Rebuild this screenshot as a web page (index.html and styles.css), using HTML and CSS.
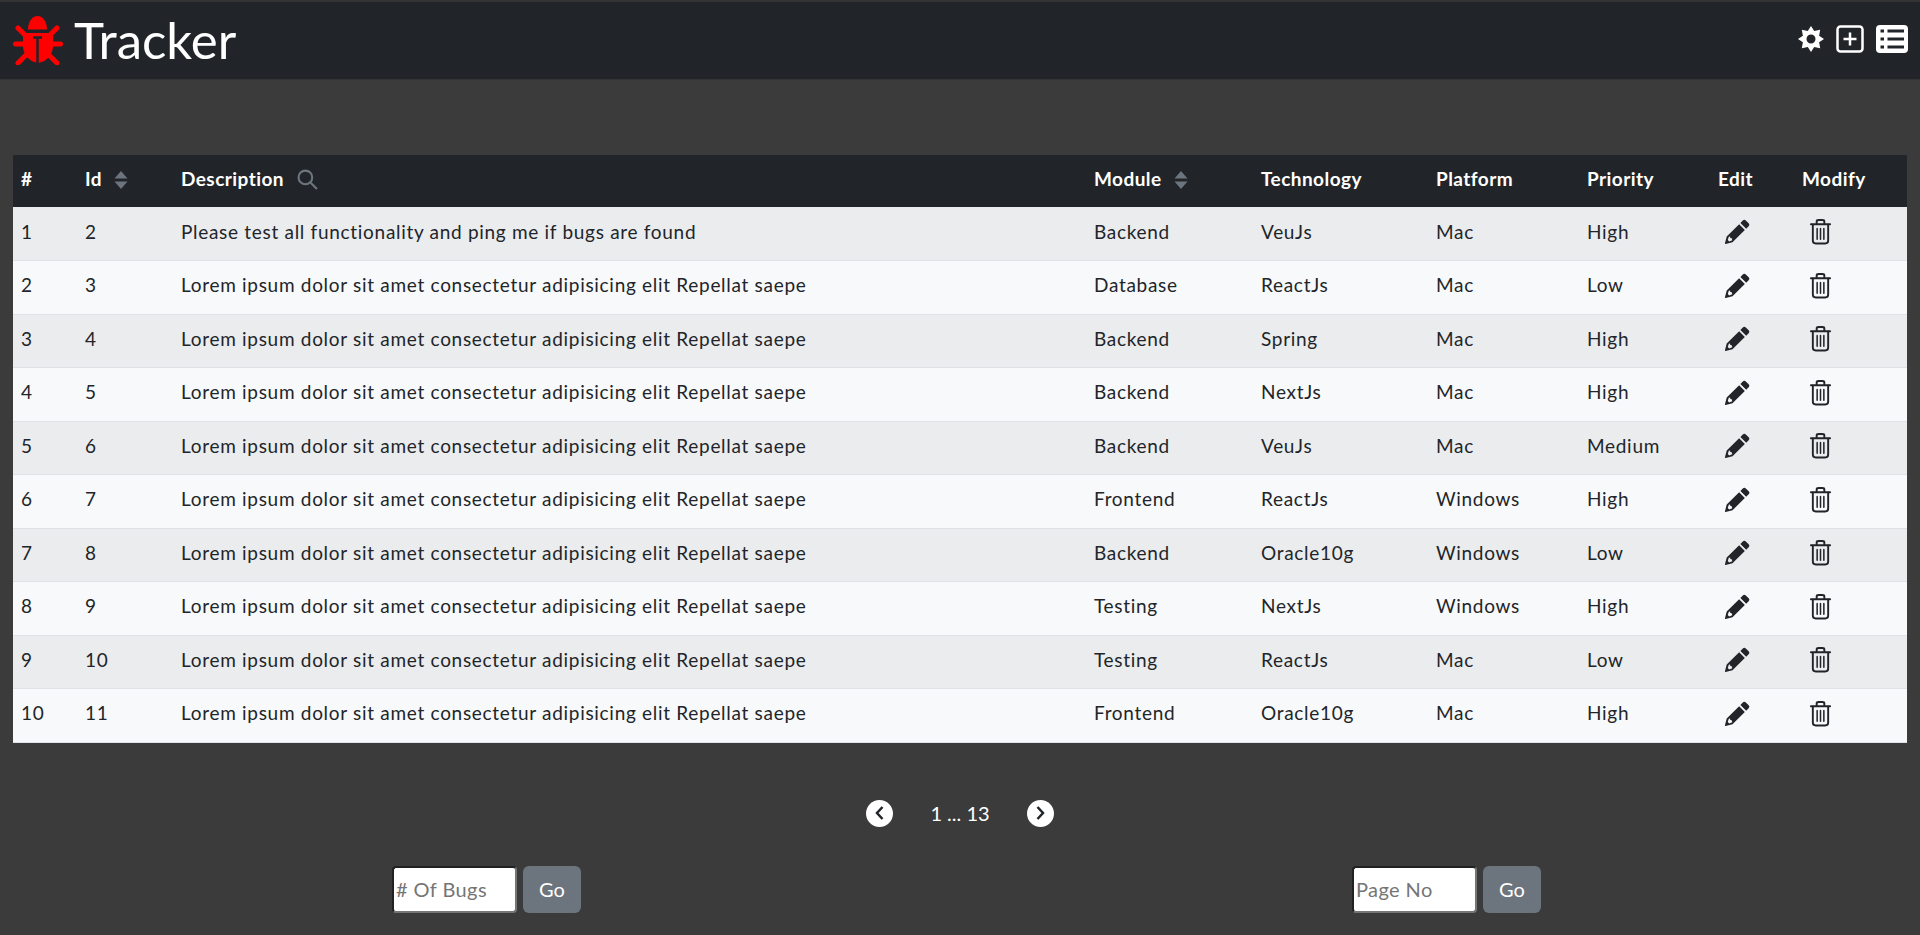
FILE: index.html
```html
<!DOCTYPE html>
<html lang="en">
  <head>
    <meta charset="UTF-8" />
    <title>Tracker</title>
    <link rel="stylesheet" href="styles.css">
  </head>
  <body>
    <svg class="icon-defs" aria-hidden="true">
      <symbol id="sort" viewBox="0 0 14 18"><path d="M7 0 13.500 7.500H.5zM.5 10.500H13.500L7 18z"/></symbol>
      <symbol id="pencil" viewBox="0 0 28 28"><path d="M19.500 2.500a2.200 2.200 0 0 1 3.100 0l3 3a2.200 2.200 0 0 1 0 3.100L23 11.200 17 5.100zM15.700 6.500l5.900 6L8.800 25.200 1.700 27a.6.6 0 0 1-.7-.7l1.800-7.100zM5 19.500l-1.100 3.300 1.500 1.500 3.200-1.100L8 21l-1.500-.2-.2-1.500z"/></symbol>
      <symbol id="trash" viewBox="0 0 24 28"><g fill="none" stroke="currentColor" stroke-width="2" stroke-linecap="round"><path d="M2 6.500H22"/><path d="M8 6V3.500C8 2.500 9 2 10 2h4c1 0 2 .5 2 1.500V6"/><path d="M4 7V23.500C4 25.500 5 26.500 7 26.500H17C19 26.500 20 25.500 20 23.500V7"/><path d="M8.500 11V22M12 11V22M15.500 11V22" stroke-width="1.600"/></g></symbol>
    </svg>

    <nav class="navbar">
      <a class="brand" href="#">
        <svg class="bug" viewBox="0 0 50 50">
          <path class="bug-part" d="M15 14.500C15 7 19 1 24.500 1S34 7 34 14.500z"/>
          <path class="bug-part" d="M10 18H40V31C40 40 33 47 25 48C17 47 10 40 10 31z"/>
          <path class="bug-legs" d="M5 13 15 23M44 13 34 23M2.500 29H47.500M5 48 15 38M44 48 34 38"/>
          <path class="bug-split" d="M20 22.500H29M24.500 22.500V49"/>
        </svg>
        <span>Tracker</span>
      </a>
      <div class="nav-icons">
        <svg class="nav-icon gear" viewBox="0 0 26 26"><path fill-rule="evenodd" d="M13 0 16.200 4.900 22.200 3.800 21.100 9.800 26 13 21.100 16.200 22.200 22.200 16.200 21.100 13 26 9.800 21.100 3.800 22.200 4.900 16.200 0 13 4.900 9.800 3.800 3.800 9.800 4.900zM13 8.500a4.500 4.500 0 1 0 0 9 4.500 4.500 0 0 0 0-9z"/></svg>
        <svg class="nav-icon plus" viewBox="0 0 28 28"><rect x="1.500" y="1.500" width="25" height="25" rx="3" fill="none" stroke="#fff" stroke-width="2.500"/><path d="M14 7.500V20.500M7.500 14H20.500" stroke="#fff" stroke-width="2.500"/></svg>
        <svg class="nav-icon list" viewBox="0 0 32 28"><rect x="0" y="0" width="32" height="28" rx="4" fill="#fff"/><path d="M4.500 6H8M11.500 6H28M4.500 14H8M11.500 14H28M4.500 22H8M11.500 22H28" stroke="#212529" stroke-width="3"/></svg>
      </div>
    </nav>

    <main class="content">
      <table class="bugs">
        <colgroup>
          <col class="c-num" /><col class="c-id" /><col class="c-desc" /><col class="c-module" /><col class="c-tech" /><col class="c-platform" /><col class="c-priority" /><col class="c-edit" /><col class="c-modify" />
        </colgroup>
        <thead>
          <tr>
            <th>#</th>
            <th>Id <svg class="sort"><use href="#sort"/></svg></th>
            <th>Description <svg class="search" viewBox="0 0 20 20"><circle cx="8" cy="8" r="6.500"/><path d="M13 13 19 19"/></svg></th>
            <th>Module <svg class="sort"><use href="#sort"/></svg></th>
            <th>Technology</th>
            <th>Platform</th>
            <th>Priority</th>
            <th>Edit</th>
            <th>Modify</th>
          </tr>
        </thead>
        <tbody>
          <tr><td>1</td><td>2</td><td>Please test all functionality and ping me if bugs are found</td><td>Backend</td><td>VeuJs</td><td>Mac</td><td>High</td><td class="act"><svg class="pencil"><use href="#pencil"/></svg></td><td class="act"><svg class="trash"><use href="#trash"/></svg></td></tr>
          <tr><td>2</td><td>3</td><td>Lorem ipsum dolor sit amet consectetur adipisicing elit Repellat saepe</td><td>Database</td><td>ReactJs</td><td>Mac</td><td>Low</td><td class="act"><svg class="pencil"><use href="#pencil"/></svg></td><td class="act"><svg class="trash"><use href="#trash"/></svg></td></tr>
          <tr><td>3</td><td>4</td><td>Lorem ipsum dolor sit amet consectetur adipisicing elit Repellat saepe</td><td>Backend</td><td>Spring</td><td>Mac</td><td>High</td><td class="act"><svg class="pencil"><use href="#pencil"/></svg></td><td class="act"><svg class="trash"><use href="#trash"/></svg></td></tr>
          <tr><td>4</td><td>5</td><td>Lorem ipsum dolor sit amet consectetur adipisicing elit Repellat saepe</td><td>Backend</td><td>NextJs</td><td>Mac</td><td>High</td><td class="act"><svg class="pencil"><use href="#pencil"/></svg></td><td class="act"><svg class="trash"><use href="#trash"/></svg></td></tr>
          <tr><td>5</td><td>6</td><td>Lorem ipsum dolor sit amet consectetur adipisicing elit Repellat saepe</td><td>Backend</td><td>VeuJs</td><td>Mac</td><td>Medium</td><td class="act"><svg class="pencil"><use href="#pencil"/></svg></td><td class="act"><svg class="trash"><use href="#trash"/></svg></td></tr>
          <tr><td>6</td><td>7</td><td>Lorem ipsum dolor sit amet consectetur adipisicing elit Repellat saepe</td><td>Frontend</td><td>ReactJs</td><td>Windows</td><td>High</td><td class="act"><svg class="pencil"><use href="#pencil"/></svg></td><td class="act"><svg class="trash"><use href="#trash"/></svg></td></tr>
          <tr><td>7</td><td>8</td><td>Lorem ipsum dolor sit amet consectetur adipisicing elit Repellat saepe</td><td>Backend</td><td>Oracle10g</td><td>Windows</td><td>Low</td><td class="act"><svg class="pencil"><use href="#pencil"/></svg></td><td class="act"><svg class="trash"><use href="#trash"/></svg></td></tr>
          <tr><td>8</td><td>9</td><td>Lorem ipsum dolor sit amet consectetur adipisicing elit Repellat saepe</td><td>Testing</td><td>NextJs</td><td>Windows</td><td>High</td><td class="act"><svg class="pencil"><use href="#pencil"/></svg></td><td class="act"><svg class="trash"><use href="#trash"/></svg></td></tr>
          <tr><td>9</td><td>10</td><td>Lorem ipsum dolor sit amet consectetur adipisicing elit Repellat saepe</td><td>Testing</td><td>ReactJs</td><td>Mac</td><td>Low</td><td class="act"><svg class="pencil"><use href="#pencil"/></svg></td><td class="act"><svg class="trash"><use href="#trash"/></svg></td></tr>
          <tr><td>10</td><td>11</td><td>Lorem ipsum dolor sit amet consectetur adipisicing elit Repellat saepe</td><td>Frontend</td><td>Oracle10g</td><td>Mac</td><td>High</td><td class="act"><svg class="pencil"><use href="#pencil"/></svg></td><td class="act"><svg class="trash"><use href="#trash"/></svg></td></tr>
        </tbody>
      </table>

      <div class="pager">
        <button class="page-arrow" aria-label="Previous"><svg viewBox="0 0 12 16"><path d="M8.500 2 3 8l5.500 6"/></svg></button>
        <span class="page-text">1 ... 13</span>
        <button class="page-arrow" aria-label="Next"><svg viewBox="0 0 12 16"><path d="M3.500 2 9 8l-5.500 6"/></svg></button>
      </div>

      <div class="forms">
        <div class="go-form"><input type="text" placeholder="# Of Bugs" /><button class="btn-go">Go</button></div>
        <div class="go-form"><input type="text" placeholder="Page No" /><button class="btn-go">Go</button></div>
      </div>
    </main>
  </body>
</html>
```

FILE: styles.css
```css
* {
  box-sizing: border-box;
}
body {
  margin: 0;
  min-height: 935px;
  overflow: hidden;
  font-family: "Lato", "Noto Sans", sans-serif;
  font-size: 19px;
  background: #3b3b3b;
  color: #212529;
}
.icon-defs {
  display: none;
}

/* navbar */
.navbar {
  height: 80px;
  padding: 0 12px 0 13px;
  display: flex;
  align-items: center;
  justify-content: space-between;
  background: #212529;
  border-top: 2px solid #333;
  border-bottom: 1px solid #333;
}
.brand {
  display: flex;
  align-items: center;
  gap: 11px;
  margin-bottom: 2px;
  color: #fff;
  text-decoration: none;
  font-size: 51px;
  line-height: 1;
}
.bug {
  width: 50px;
  height: 50px;
}
.bug-part {
  fill: #f00;
}
.bug-legs {
  fill: none;
  stroke: #f00;
  stroke-width: 5;
  stroke-linecap: round;
}
.bug-split {
  fill: none;
  stroke: #212529;
  stroke-width: 2.500;
}
.nav-icons {
  display: flex;
  align-items: center;
  gap: 12px;
  margin-bottom: 4px;
}
.nav-icon {
  display: block;
  fill: #fff;
}
.gear {
  width: 26px;
  height: 26px;
  margin-top: 1px;
}
.plus {
  width: 28px;
  height: 28px;
}
.list {
  width: 32px;
  height: 28px;
}

/* table */
.content {
  padding: 75px 13px 0;
}
.bugs {
  width: 1894px;
  table-layout: fixed;
  border-collapse: collapse;
  background: #f8f9fa;
}
.c-num { width: 64px; }
.c-id { width: 96px; }
.c-desc { width: 913px; }
.c-module { width: 167px; }
.c-tech { width: 175px; }
.c-platform { width: 151px; }
.c-priority { width: 131px; }
.c-edit { width: 84px; }
.c-modify { width: 113px; }

.bugs th {
  height: 52px;
  padding: 0 8px 5px;
  text-align: left;
  font-weight: 700;
  letter-spacing: 0.45px;
  color: #fff;
  background: #212529;
}
.bugs td {
  height: 53.5px;
  padding: 0 8px 5px;
  letter-spacing: 0.7px;
  color: #212529;
  border-bottom: 1px solid #dee2e6;
}
.bugs tbody tr:nth-child(odd) td {
  background: #ebecee;
}
.bugs td.act {
  padding: 0 0 4px 14px;
}
.sort {
  width: 14px;
  height: 18px;
  margin-left: 7px;
  vertical-align: -3px;
  fill: #6c757d;
}
.search {
  width: 21px;
  height: 21px;
  margin-left: 8px;
  vertical-align: -4px;
  fill: none;
  stroke: #6c757d;
  stroke-width: 2;
}
.pencil {
  display: block;
  width: 27px;
  height: 27px;
  fill: #212529;
}
.trash {
  display: block;
  width: 23px;
  height: 27px;
  margin-left: 1px;
  color: #212529;
}

/* pager */
.pager {
  margin-top: 57px;
  display: flex;
  justify-content: center;
  align-items: center;
  gap: 37px;
}
.page-arrow {
  width: 27px;
  height: 27px;
  padding: 0;
  border: none;
  border-radius: 50%;
  background: #fff;
}
.page-arrow svg {
  display: block;
  width: 12px;
  height: 16px;
  margin: 0 auto;
  fill: none;
  stroke: #212529;
  stroke-width: 2.500;
}
.page-text {
  color: #fff;
  font-size: 20px;
}

/* bottom forms */
.forms {
  margin: 39px -13px 0;
  display: grid;
  grid-template-columns: 1fr 1fr;
}
.go-form {
  display: flex;
  justify-content: center;
  gap: 6px;
  padding-left: 13px;
}
.go-form input {
  width: 125px;
  height: 47px;
  padding: 1px 2px;
  border: 2px inset #767676;
  border-radius: 4px;
  background: #fff;
  font: inherit;
  font-size: 20px;
  letter-spacing: 0.4px;
}
.go-form input::placeholder {
  color: #757575;
}
.btn-go {
  width: 58px;
  height: 47px;
  border: none;
  border-radius: 6px;
  background: #6c757d;
  color: #fff;
  font: inherit;
  font-size: 20px;
}
```
